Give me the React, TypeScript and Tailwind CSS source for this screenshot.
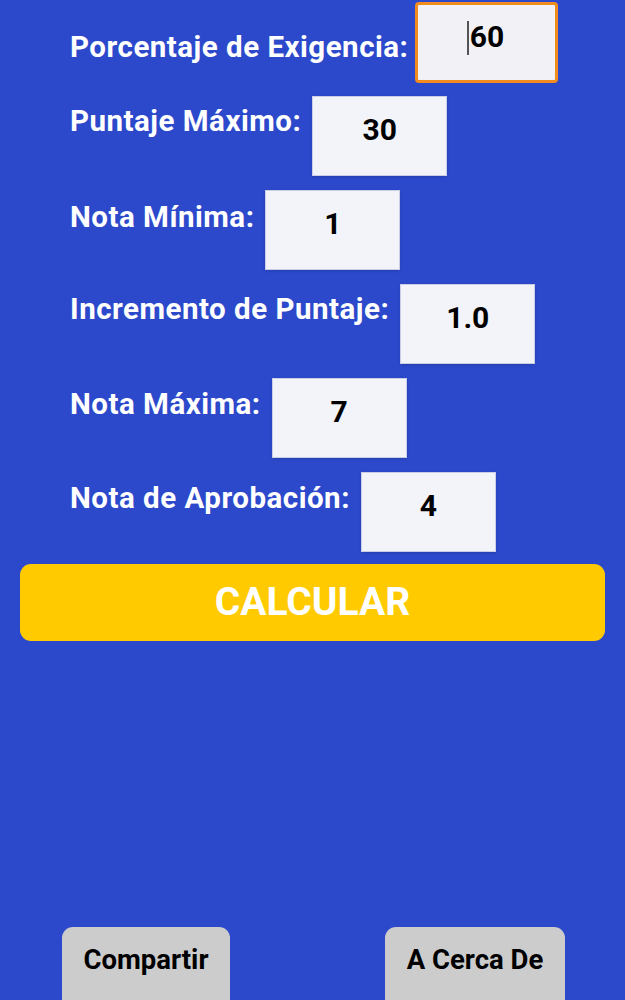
const fields: { label: string; value: string; labelTop: string; focused?: boolean }[] = [
  { label: "Porcentaje de Exigencia:", value: "60", labelTop: "pt-[28px]", focused: true },
  { label: "Puntaje Máximo:", value: "30", labelTop: "pt-[8px]" },
  { label: "Nota Mínima:", value: "1", labelTop: "pt-[10px]" },
  { label: "Incremento de Puntaje:", value: "1.0", labelTop: "pt-[8px]" },
  { label: "Nota Máxima:", value: "7", labelTop: "pt-[9px]" },
  { label: "Nota de Aprobación:", value: "4", labelTop: "pt-[9px]" },
];

const Field = ({ label, value, labelTop, focused }: (typeof fields)[number]) => {
  return (
    <div className="flex items-start h-[94px]">
      <span className={`text-[29.5px] font-bold text-white leading-[35px] tracking-[0.5px] ${labelTop}`}>{label}</span>
      {focused ? (
        <div className="ml-[7px] w-[143px] h-[81px] border-[3px] border-[#f28c1e] rounded-[4px] bg-[#f1f1f6] flex justify-center pt-[14px]">
          <span className="w-[2px] h-[34px] bg-[#555] mt-[2px] mr-[1px]"></span>
          <span className="text-[30px] font-bold text-black leading-[35px]">{value}</span>
          <span className="w-[3px]"></span>
        </div>
      ) : (
        <div className="ml-[11px] w-[135px] h-[80px] bg-[#f3f3fa] border border-[#c9cde6] shadow-sm text-center pt-[15px]">
          <span className="text-[30px] font-bold text-black leading-[35px]">{value}</span>
        </div>
      )}
    </div>
  );
};

export default function App() {
  return (
    <div
      className="w-[625px] h-[1000px] bg-[#2c49cb] flex flex-col overflow-hidden"
      style={{ fontFamily: "Roboto, 'Noto Sans', sans-serif" }}
    >
      <div className="pl-[70px] pt-[2px]">
        {fields.map((f) => (
          <Field key={f.label} {...f} />
        ))}
      </div>
      <div className="px-[20px] -mt-[2px]">
        <button className="w-full h-[77px] bg-[#ffcb00] rounded-[11px] text-white text-[39px] font-bold leading-none">
          CALCULAR
        </button>
      </div>
      <div className="mt-auto flex justify-between pl-[62px] pr-[60px]">
        <button className="w-[168px] h-[85px] -mb-[12px] bg-[#cccccc] rounded-[11px] text-black text-[27.5px] font-bold pb-[20px]">
          Compartir
        </button>
        <button className="w-[180px] h-[85px] -mb-[12px] bg-[#cccccc] rounded-[11px] text-black text-[27.5px] font-bold pb-[20px]">
          A Cerca De
        </button>
      </div>
    </div>
  );
}
